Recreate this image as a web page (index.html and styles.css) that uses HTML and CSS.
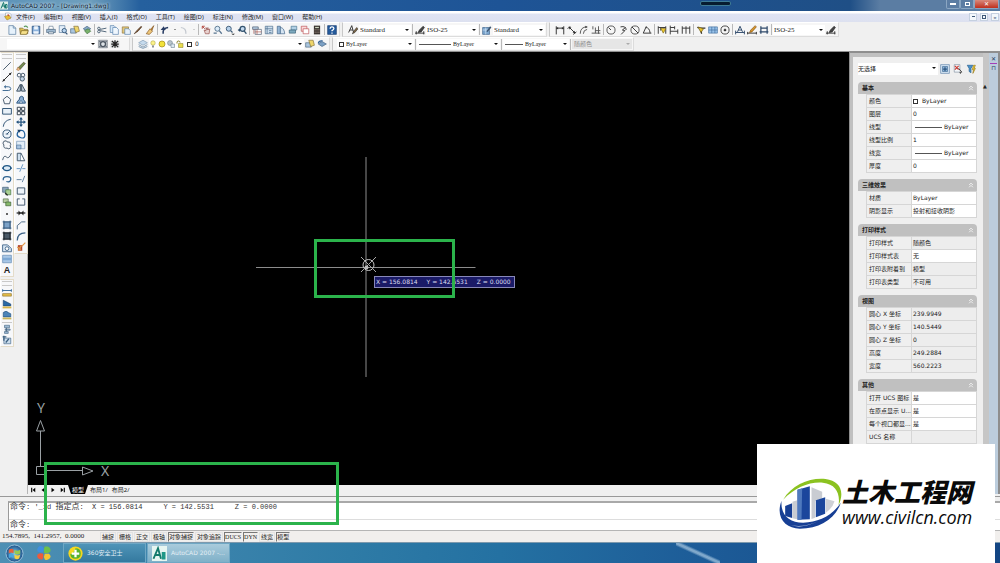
FILE: index.html
```
<!DOCTYPE html>
<html lang="zh-CN">
<head>
  <meta charset="UTF-8">
  <meta name="viewport" content="width=device-width, initial-scale=1.0">
  <title>AutoCAD 2007 - [Drawing1.dwg]</title>
  <link rel="stylesheet" href="styles.css">
</head>
<body>

  <!-- icons -->
  <svg class="sprite" aria-hidden="true">
    <symbol id="new" viewBox="0 0 16 16"><path d="M3 1h7l4 4v10H3z" fill="#e6f1fb" stroke="#4a7196"/><path d="M10 1v4h4" fill="none" stroke="#4a7196"/></symbol>
    <symbol id="open" viewBox="0 0 16 16"><path d="M1 5h5l2 2h6v7H2z" fill="#e2c14e" stroke="#6d5a22"/><path d="M4 9h11l-3 6H2z" fill="#f6e08a" stroke="#6d5a22"/><path d="M8 3q3-3 6 1" fill="none" stroke="#5a9a5f" stroke-width="2"/></symbol>
    <symbol id="save" viewBox="0 0 16 16"><path d="M2 2h12v12H2z" fill="#8db3dc" stroke="#345c8c" stroke-width="1.5"/><path d="M5 2h6v5H5zM4 10h8v4H4z" fill="#eef5fc"/></symbol>
    <symbol id="print" viewBox="0 0 16 16"><path d="M5 2h6l1 5H4z" fill="#fff" stroke="#5b7288"/><path d="M1 7h14v5H1z" fill="#9fb9d1" stroke="#48627a"/><path d="M4 11h8v3H4z" fill="#e9eef3" stroke="#48627a"/></symbol>
    <symbol id="preview" viewBox="0 0 16 16"><path d="M2 1h9v11H2z" fill="#e4effa" stroke="#55789b"/><circle cx="10" cy="9" r="3.5" fill="#b7d3ee" stroke="#38597b" stroke-width="1.5"/><path d="M12 12l3 3" stroke="#38597b" stroke-width="2"/></symbol>
    <symbol id="publish" viewBox="0 0 16 16"><path d="M1 6h9v7H1z" fill="#aac6df" stroke="#48627a"/><path d="M6 2h7l2 8-6 2z" fill="#eed56a" stroke="#7b6931"/></symbol>
    <symbol id="dwf" viewBox="0 0 16 16"><path d="M8 2l6 4-6 4-6-4z" fill="#86a8c4" stroke="#3e5f7e"/><path d="M4 9l6-3 4 4-6 4z" fill="#79b26b" stroke="#3d6b3a"/></symbol>
    <symbol id="layprev" viewBox="0 0 16 16"><path d="M8 4l7 4-7 4-6-4z" fill="#7ba0c4" stroke="#3e5f7e"/><path d="M2 7q1-5 7-4" fill="none" stroke="#2f5f95" stroke-width="2"/></symbol>
    <symbol id="cut" viewBox="0 0 16 16"><path d="M5 7l10-2M5 9l10 2" stroke="#4b6074" stroke-width="1.5"/><circle cx="3" cy="5.500" r="2" fill="none" stroke="#4b6074" stroke-width="1.500"/><circle cx="3" cy="10.500" r="2" fill="none" stroke="#4b6074" stroke-width="1.500"/></symbol>
    <symbol id="copy" viewBox="0 0 16 16"><path d="M2 1h6l3 3v8H2z" fill="#d9e9f8" stroke="#4f7aa6"/><path d="M6 4h6l3 3v8H6z" fill="#f0f7fd" stroke="#4f7aa6"/></symbol>
    <symbol id="paste" viewBox="0 0 16 16"><path d="M2 3h10v10H2z" fill="#e3c77a" stroke="#8a713a"/><path d="M6 6h6l3 3v6H6z" fill="#e7f1fb" stroke="#4f7aa6"/></symbol>
    <symbol id="match" viewBox="0 0 16 16"><path d="M2 14l4-5 7-7 1 1-6 7z" fill="#7a4f2a" stroke="#4b3524"/></symbol>
    <symbol id="brush" viewBox="0 0 16 16"><path d="M14 1L9 7l2 2z" fill="#c78a3a" stroke="#7b4c16"/><path d="M8 6l4 4-5 5-5-1z" fill="#efc87b" stroke="#7b4c16"/></symbol>
    <symbol id="undo" viewBox="0 0 16 16"><path d="M5 14q-1-9 8-10" fill="none" stroke="#283c63" stroke-width="2.500"/><path d="M1 8l5-6 3 6z" fill="#283c63"/></symbol>
    <symbol id="redo" viewBox="0 0 16 16"><path d="M11 14q1-9-8-10" fill="none" stroke="#c3c8cf" stroke-width="2"/></symbol>
    <symbol id="pan" viewBox="0 0 16 16"><path d="M2 2l4 4M2 2h4M2 2v4" stroke="#b1453c" stroke-width="1.500"/><path d="M5 8l2 6h6l1-8-2 2-1-4-1 4-2-4v5z" fill="#e9d3d0" stroke="#8e4540"/></symbol>
    <symbol id="zoom" viewBox="0 0 16 16"><circle cx="7" cy="6" r="4" fill="#dcebf8" stroke="#587590" stroke-width="1.500"/><path d="M10 9l4 5M1 13h5" stroke="#587590" stroke-width="2"/></symbol>
    <symbol id="zoomwin" viewBox="0 0 16 16"><circle cx="6" cy="6" r="4" fill="#b7d1ea" stroke="#3e5b77" stroke-width="1.500"/><path d="M9 9l3 3" stroke="#3e5b77" stroke-width="2"/><path d="M10 14h6l-3 2z" fill="#222"/></symbol>
    <symbol id="zoomprev" viewBox="0 0 16 16"><circle cx="9" cy="6" r="4" fill="#c3d9ee" stroke="#35546f" stroke-width="2"/><path d="M11 9l4 5" stroke="#35546f" stroke-width="2"/><path d="M1 8l4-3v6z" fill="#2a4b6b"/></symbol>
    <symbol id="props" viewBox="0 0 16 16"><path d="M1 3h9v4H1z" fill="#b7cde0" stroke="#41546a"/><path d="M5 7h10v8H5z" fill="#fff" stroke="#41546a"/><path d="M3 7v7M8 7v8M5 11h10" stroke="#a14a42"/></symbol>
    <symbol id="center" viewBox="0 0 16 16"><path d="M2 2h12v12H2z" fill="#cfe0ef" stroke="#436585"/><path d="M5 2v12M2 6h12M8 9h4M8 12h4" stroke="#436585"/></symbol>
    <symbol id="palettes" viewBox="0 0 16 16"><path d="M2 2h5v12H2z" fill="#96b7d6" stroke="#375b80"/><path d="M7 4q6 0 7 10H7z" fill="#d6e5f2" stroke="#375b80"/></symbol>
    <symbol id="sheets" viewBox="0 0 16 16"><path d="M5 2h9v6H5z" fill="#b2d0e4" stroke="#44708b"/><path d="M2 8h10v5H2z" fill="#7eaabe" stroke="#315a70"/></symbol>
    <symbol id="markup" viewBox="0 0 16 16"><path d="M2 2h9v8H2z" fill="#fbdada" stroke="#b8474b"/><path d="M5 6h9v8H5z" fill="#fff" stroke="#b8474b"/></symbol>
    <symbol id="calc" viewBox="0 0 16 16"><path d="M3 1h10v14H3z" fill="#3c3632"/><path d="M5 3h6v2H5z" fill="#cfd7c2"/><path d="M5 7v6M8 7v6M11 7v6" stroke="#b5a195" stroke-dasharray="1 1" stroke-width="2"/></symbol>
    <symbol id="help" viewBox="0 0 16 16"><path d="M1 1h14v14H1z" fill="#245a9b" stroke="#163c70"/><path d="M5 6q0-3 3-3t3 3q0 1-3 3v1M8 12v2" fill="none" stroke="#fff" stroke-width="2"/></symbol>
    <symbol id="textstyle" viewBox="0 0 16 16"><path d="M1 12L6 1l3 11M3 8h5" fill="none" stroke="#333" stroke-width="1.500"/><path d="M7 14l2-4 5-6 2 2-5 6z" fill="#7d6440" stroke="#333"/></symbol>
    <symbol id="dimstyle" viewBox="0 0 16 16"><path d="M0 13h15M2 10v5M14 10v5" stroke="#333" stroke-width="1.500"/><path d="M5 12l2-4 6-6 2 2-5 7z" fill="#444" stroke="#222"/></symbol>
    <symbol id="tablestyle" viewBox="0 0 16 16"><path d="M1 4h11v11H1z" fill="#7da7cf" stroke="#365d87"/><path d="M1 8h11M6 4v11" stroke="#dfeefb"/><path d="M7 10l6-8 2 2-6 7z" fill="#3d5672"/></symbol>
    <symbol id="dimlin" viewBox="0 0 16 16"><path d="M2 2v13M14 2v13M2 5h12" fill="none" stroke="#2c2c2c" stroke-width="1.500"/><path d="M2 5l3-2v4zM14 5l-3-2v4z" fill="#2c2c2c"/></symbol>
    <symbol id="dimalign" viewBox="0 0 16 16"><path d="M3 3l10 10M1 6l4-4M10 15l5-4" fill="none" stroke="#2c2c2c" stroke-width="1.500"/><path d="M3 3l4 1-3 3zM13 13l-4-1 3-3z" fill="#2c2c2c"/></symbol>
    <symbol id="dimarc" viewBox="0 0 16 16"><path d="M2 14Q2 3 13 3M7 14q0-6 6-7" fill="none" stroke="#555" stroke-width="1.500"/><path d="M14 3l-4-2v4z" fill="#444"/></symbol>
    <symbol id="dimord" viewBox="0 0 16 16"><path d="M3 2v5M7 4v9M12 2v12M1 13h14M7 9h8" fill="none" stroke="#555" stroke-width="1.500"/></symbol>
    <symbol id="dimrad" viewBox="0 0 16 16"><circle cx="8" cy="8" r="6.500" fill="none" stroke="#555" stroke-width="1.500"/><path d="M8 8L4 4" stroke="#333" stroke-width="1.500"/></symbol>
    <symbol id="dimjog" viewBox="0 0 16 16"><path d="M4 3q9-2 9 5M12 4L7 8l4 1-6 6" fill="none" stroke="#333" stroke-width="1.500"/></symbol>
    <symbol id="dimdia" viewBox="0 0 16 16"><circle cx="8" cy="8" r="6.500" fill="none" stroke="#555" stroke-width="1.500"/><path d="M3 3l10 10" stroke="#333" stroke-width="1.500"/></symbol>
    <symbol id="dimang" viewBox="0 0 16 16"><path d="M7 2L2 13h13M6 4q6 0 7 9" fill="none" stroke="#333" stroke-width="1.500"/></symbol>
    <symbol id="qdim" viewBox="0 0 16 16"><path d="M2 2v12M14 2v12M2 4h12M6 4v5" stroke="#333" stroke-width="1.500"/><path d="M6 5l8 1-4 7z" fill="#efc92a" stroke="#7a6512"/></symbol>
    <symbol id="dimbase" viewBox="0 0 16 16"><path d="M2 1v14M2 4h7M9 2v5M2 10h12M14 7v7" stroke="#333" stroke-width="1.500"/></symbol>
    <symbol id="dimcont" viewBox="0 0 16 16"><path d="M2 2v12M8 2v12M14 2v12M2 5h12" stroke="#333" stroke-width="1.500"/></symbol>
    <symbol id="leader" viewBox="0 0 16 16"><path d="M2 4l5 1h8M7 5l2 9" fill="none" stroke="#333" stroke-width="2"/><path d="M3 3l9 3-4 6z" fill="#e6c02b" stroke="#5d4c12"/></symbol>
    <symbol id="tol" viewBox="0 0 16 16"><path d="M1 3h14v10H1z" fill="#9ac3ea" stroke="#3f6c9b"/><path d="M6 3v10M11 3v10M1 8h14" stroke="#3f6c9b"/></symbol>
    <symbol id="cmark" viewBox="0 0 16 16"><circle cx="8" cy="8" r="6.500" fill="none" stroke="#444" stroke-width="1.500"/><path d="M8 6v4M6 8h4" stroke="#222" stroke-width="2"/></symbol>
    <symbol id="dimedit" viewBox="0 0 16 16"><path d="M1 12h14M1 9v6M15 9v6M4 11l4-9 4 9M5 8h6" fill="none" stroke="#2f4a6b" stroke-width="1.500"/></symbol>
    <symbol id="dimtedit" viewBox="0 0 16 16"><path d="M1 13h14M1 11v4M15 11v4" stroke="#333" stroke-width="1.500"/><path d="M4 12l2-4 7-7 2 2-7 8z" fill="#d9972b" stroke="#7a4b10"/></symbol>
    <symbol id="dimupd" viewBox="0 0 16 16"><path d="M3 2v12M13 2v12M3 5h10M1 11h14" stroke="#2f4a6b" stroke-width="2"/></symbol>
    <symbol id="ws" viewBox="0 0 16 16"><path d="M1 2h14v12H1z" fill="#b4bac0" stroke="#757d85"/><circle cx="8" cy="8" r="4" fill="#dde2e6" stroke="#4c5662" stroke-width="2"/><path d="M2 3l3 3M14 3l-3 3M2 13l3-3M14 13l-3-3" stroke="#4c5662" stroke-width="1.500"/></symbol>
    <symbol id="mine" viewBox="0 0 16 16"><path d="M1 3h14v11H1z" fill="#d5d8da"/><path d="M3 3l10 10M13 3L3 13M8 2v12M2 8h12" stroke="#222" stroke-width="2"/></symbol>
    <symbol id="layers" viewBox="0 0 16 16"><path d="M8 2l7 4-7 4-7-4z" fill="#c6dbed" stroke="#7c97b0"/><path d="M1 9l7 4 7-4M1 12l7 3 7-3" fill="none" stroke="#7c97b0" stroke-width="1.500"/></symbol>
    <symbol id="bulb" viewBox="0 0 16 16"><circle cx="8" cy="6" r="4.500" fill="#fbf28b" stroke="#a39a3a"/><path d="M6 11h4v4H6z" fill="#8d9298"/></symbol>
    <symbol id="sun" viewBox="0 0 16 16"><circle cx="8" cy="8" r="6" fill="#f2e23a" stroke="#a58f1a" stroke-width="1.500"/></symbol>
    <symbol id="vpfreeze" viewBox="0 0 16 16"><circle cx="6" cy="6" r="5" fill="#b8c4cc" stroke="#6d7d88"/><path d="M8 8h7v7H8z" fill="#dce8f0" stroke="#587085"/></symbol>
    <symbol id="lock" viewBox="0 0 16 16"><path d="M2 7V5q0-3 3-3t3 3" fill="none" stroke="#857c27" stroke-width="2"/><path d="M5 7h9v8H5z" fill="#e8dc4d" stroke="#857c27"/></symbol>
    <symbol id="line" viewBox="0 0 16 16"><path d="M2 14L14 2" stroke="#44586a" stroke-width="1.500"/></symbol>
    <symbol id="xline" viewBox="0 0 16 16"><path d="M1 15L15 1" stroke="#222" stroke-width="1.500"/><path d="M1 15l1-4 3 3zM15 1l-4 1 3 3z" fill="#222"/></symbol>
    <symbol id="pline" viewBox="0 0 16 16"><path d="M1 12h9q4 0 4-3t-4-3H5" fill="none" stroke="#39658f" stroke-width="1.500"/><path d="M3 6l3-3v6z" fill="#39658f"/></symbol>
    <symbol id="polygon" viewBox="0 0 16 16"><path d="M8 2l6 5-2 7H4L2 7z" fill="none" stroke="#44586a" stroke-width="1.500"/></symbol>
    <symbol id="rect" viewBox="0 0 16 16"><path d="M1 4h14v9H1z" fill="#e8f1f9" stroke="#2f5273" stroke-width="1.500"/></symbol>
    <symbol id="arc" viewBox="0 0 16 16"><path d="M2 14Q3 4 14 2" fill="none" stroke="#2f5273" stroke-width="1.500"/></symbol>
    <symbol id="circle" viewBox="0 0 16 16"><circle cx="8" cy="8" r="6.500" fill="#eef4fa" stroke="#2f5273" stroke-width="1.500"/><path d="M8 8l4-4M6 8h4" stroke="#2f5273" stroke-width="1.500"/></symbol>
    <symbol id="cloud" viewBox="0 0 16 16"><path d="M3 2q5-2 5 1 6-1 6 4-2 2 0 5-3 4-6 1-6 1-5-5-3-3 0-6z" fill="none" stroke="#44586a" stroke-width="1.500"/></symbol>
    <symbol id="spline" viewBox="0 0 16 16"><path d="M1 13Q3 4 7 8t8-6" fill="none" stroke="#44586a" stroke-width="1.500"/></symbol>
    <symbol id="ellipse" viewBox="0 0 16 16"><ellipse cx="8" cy="8" rx="6" ry="4" fill="#dcebf7" stroke="#1f5684" stroke-width="2"/><path d="M0 8h3M13 8h3" stroke="#1f5684" stroke-width="2"/></symbol>
    <symbol id="earc" viewBox="0 0 16 16"><path d="M2 10q-1-6 6-6t6 5-7 3" fill="none" stroke="#2b618f" stroke-width="2"/></symbol>
    <symbol id="insert" viewBox="0 0 16 16"><path d="M1 2h9v8H1z" fill="#8da7bb" stroke="#35546f"/><path d="M6 6h8v8H6z" fill="#a9cf92" stroke="#3c6b37"/><path d="M9 15l-4-4" stroke="#222" stroke-width="2"/></symbol>
    <symbol id="block" viewBox="0 0 16 16"><path d="M2 3h8v6H2z" fill="#b8cda0" stroke="#4a6640"/><path d="M6 8h8v6H6z" fill="#87b96c" stroke="#35592a"/></symbol>
    <symbol id="point" viewBox="0 0 16 16"><circle cx="8" cy="8" r="1.500" fill="#222"/></symbol>
    <symbol id="hatch" viewBox="0 0 16 16"><path d="M3 3h10v10H3z" fill="#7ba2c8" stroke="#385d80"/><path d="M1 3h14M1 13h14M3 1v14M13 1v14" stroke="#385d80" stroke-width="1.500"/></symbol>
    <symbol id="gradient" viewBox="0 0 16 16"><path d="M3 3h10v10H3z" fill="#4b5a68" stroke="#1c242c"/><path d="M1 3h14M1 13h14M3 1v14M13 1v14" stroke="#1c242c" stroke-width="1.500"/></symbol>
    <symbol id="region" viewBox="0 0 16 16"><path d="M1 3h8l6 6v5H1z" fill="#d7e6f4" stroke="#44698d" stroke-width="1.500"/><circle cx="8" cy="9" r="3" fill="#fff" stroke="#44698d" stroke-width="1.500"/></symbol>
    <symbol id="table" viewBox="0 0 16 16"><path d="M1 2h14v12H1z" fill="#a9c7e6" stroke="#5b83ad"/><path d="M1 6h14v4H1z" fill="#7ea8d4"/></symbol>
    <symbol id="erase" viewBox="0 0 16 16"><path d="M3 11l9-9 3 2-8 9z" fill="#6f8c4f" stroke="#54452c"/><path d="M1 14l2-4 4 3-3 2z" fill="#eec28c" stroke="#a26c3a"/></symbol>
    <symbol id="copyobj" viewBox="0 0 16 16"><circle cx="5" cy="5" r="3" fill="none" stroke="#44586a" stroke-width="1.500"/><circle cx="11" cy="5" r="3" fill="none" stroke="#44586a" stroke-width="1.500"/><circle cx="10" cy="11" r="3.500" fill="#c5d7e8" stroke="#44586a" stroke-width="1.500"/></symbol>
    <symbol id="mirror" viewBox="0 0 16 16"><path d="M7 2v11H1zM9 2v11h6z" fill="#c3d0dc" stroke="#3c4f60" stroke-width="1.500"/></symbol>
    <symbol id="offset" viewBox="0 0 16 16"><path d="M1 13Q3 8 5 8q0-6 4-6t3 6q3 1 3 5z" fill="#8cb0d3" stroke="#345b82" stroke-width="1.500"/><path d="M6 13q0-4 2-4t2 4z" fill="#eef4fa" stroke="#345b82"/></symbol>
    <symbol id="array" viewBox="0 0 16 16"><path d="M2 2h5v5H2zM9 2h5v5H9zM2 9h5v5H2zM9 9h5v5H9z" fill="#fff" stroke="#2d3a46" stroke-width="1.500"/></symbol>
    <symbol id="move" viewBox="0 0 16 16"><path d="M8 3v10M3 8h10" stroke="#25537d" stroke-width="2"/><path d="M8 0l3 4H5zM8 16l3-4H5zM0 8l4-3v6zM16 8l-4-3v6z" fill="#25537d"/></symbol>
    <symbol id="rotate" viewBox="0 0 16 16"><path d="M5 3q8-3 9 5t-6 6-6-6q0-3 3-5" fill="none" stroke="#25639d" stroke-width="2"/><path d="M2 1h6L5 6z" fill="#1c4166"/></symbol>
    <symbol id="scale" viewBox="0 0 16 16"><path d="M1 2h13v12H1z" fill="#e3eef8" stroke="#6a8cae"/><path d="M1 8h7v6H1z" fill="#a9c5e0" stroke="#4b7198"/></symbol>
    <symbol id="stretch" viewBox="0 0 16 16"><path d="M2 2h6v12H2z" fill="#cfe0ef" stroke="#41566a" stroke-width="1.500"/><path d="M8 2l6 12H8" fill="#fff" stroke="#41566a" stroke-width="1.500"/></symbol>
    <symbol id="trim" viewBox="0 0 16 16"><path d="M1 9h6M10 9h5M6 14l5-12" stroke="#6393bf" stroke-width="1.500"/></symbol>
    <symbol id="extend" viewBox="0 0 16 16"><path d="M1 9h8M10 13l4-10" stroke="#5e7e9c" stroke-width="1.500"/></symbol>
    <symbol id="brkpt" viewBox="0 0 16 16"><path d="M2 3h12v10H2z" fill="#edf3f9" stroke="#3c5268" stroke-width="1.500"/></symbol>
    <symbol id="brk" viewBox="0 0 16 16"><path d="M6 3H2v10h12V3h-4" fill="none" stroke="#3c5268" stroke-width="1.500"/></symbol>
    <symbol id="join" viewBox="0 0 16 16"><path d="M1 8h14" stroke="#222" stroke-width="2"/><path d="M8 8L4 4v8zM8 8l4-4v8z" fill="#222"/></symbol>
    <symbol id="chamfer" viewBox="0 0 16 16"><path d="M2 15V9l7-6h6" fill="none" stroke="#4a6984" stroke-width="1.500"/></symbol>
    <symbol id="fillet" viewBox="0 0 16 16"><path d="M2 15Q2 3 15 3" fill="none" stroke="#3d6285" stroke-width="2"/></symbol>
    <symbol id="explode" viewBox="0 0 16 16"><path d="M3 5h7v9H3z" fill="#b5482f"/><path d="M9 7l6-6M4 14l4-8M2 8l6 4" stroke="#e49a4a" stroke-width="2"/></symbol>
    <symbol id="dist" viewBox="0 0 16 16"><path d="M1 4h14M1 2v4M15 2v4" stroke="#35699b" stroke-width="1.500"/><path d="M1 9h14v4H1z" fill="#e6bf4a" stroke="#8c712a"/></symbol>
    <symbol id="area" viewBox="0 0 16 16"><path d="M2 2l12 6v3H2z" fill="#2b6aa6" stroke="#1a4370"/><path d="M1 12h14v3H1z" fill="#d8b64c"/></symbol>
    <symbol id="mass" viewBox="0 0 16 16"><path d="M2 4q5-4 8 0l4 2v5H2z" fill="#4c84b8" stroke="#1f4d7c"/><path d="M1 12h14v3H1z" fill="#c8b45c"/></symbol>
    <symbol id="list" viewBox="0 0 16 16"><path d="M4 2h8v4H4zM5 8h8v2H5zM4 12h6v3H4z" fill="#9cbad4" stroke="#456582"/><path d="M7 6v6" stroke="#456582" stroke-width="1.500"/></symbol>
    <symbol id="locate" viewBox="0 0 16 16"><path d="M3 5h11v9H3z" fill="#cadcec" stroke="#3b5f80"/><path d="M3 1v8M1 3h6M6 12l5-6" fill="none" stroke="#3b5f80" stroke-width="2"/></symbol>
    <symbol id="pick" viewBox="0 0 16 16"><path d="M1 1h14v14H1z" fill="#d4e4f3" stroke="#5b7fa5"/><path d="M4 4h8v8H4z" fill="#8db3d8" stroke="#3c668f"/><path d="M8 5v6M5 8h6" stroke="#2d567f" stroke-width="2"/></symbol>
    <symbol id="selobj" viewBox="0 0 16 16"><path d="M2 1h9v12H2z" fill="#f4f7fa" stroke="#7b8b9b"/><path d="M3 3l6 6M9 3L3 9" stroke="#cc3d33" stroke-width="2"/><path d="M9 7l5 6-3 .5 1 2" fill="#fff" stroke="#333" stroke-width="1.500"/></symbol>
    <symbol id="qsel" viewBox="0 0 16 16"><path d="M2 2h9L8 7v7L5 12V7z" fill="#4a93cc" stroke="#235a88"/><path d="M12 2l3 0-2 5h2l-4 8 1-6h-2z" fill="#f0c72c" stroke="#92761a"/></symbol>
    <symbol id="fold" viewBox="0 0 16 16"><path d="M3 8l5-5 5 5M3 14l5-5 5 5" fill="none" stroke="#fff" stroke-width="2"/></symbol>
    <symbol id="first" viewBox="0 0 16 16"><path d="M3 2h3v12H3zM14 2v12L7 8z"/></symbol>
    <symbol id="prev" viewBox="0 0 16 16"><path d="M12 2v12L4 8z"/></symbol>
    <symbol id="next" viewBox="0 0 16 16"><path d="M4 2v12l8-6z"/></symbol>
    <symbol id="last" viewBox="0 0 16 16"><path d="M10 2h3v12h-3zM2 2v12l7-6z"/></symbol>
  </svg>

  <header class="titlebar">
    <svg class="app-icon" viewBox="0 0 16 16" aria-hidden="true"><path d="M0 0h16v16H0z" fill="#d8ebe8"/><path d="M2 14L7 2l3 12M4 9h5M11 6h3v7h-3z" fill="none" stroke="#17786e" stroke-width="2"/></svg>
    <h1>AutoCAD 2007 - [Drawing1.dwg]</h1>
    <span class="gadget"></span>
    <div class="win-controls">
      <button aria-label="最小化"><i class="min"></i></button>
      <button aria-label="还原"><i class="max"></i></button>
      <button class="close" aria-label="关闭">✕</button>
    </div>
  </header>

  <nav class="menubar">
    <svg class="doc-icon" viewBox="0 0 16 16" aria-hidden="true"><path d="M3 1h8l3 3v7H3z" fill="#fff" stroke="#7d8ea0"/><path d="M1 8l9-3 4 6-8 4z" fill="#e8be35" stroke="#97761c"/><path d="M7 3l4 2-3 3z" fill="#c6433a"/></svg>
    <button>文件(F)</button>
    <button>编辑(E)</button>
    <button>视图(V)</button>
    <button>插入(I)</button>
    <button>格式(O)</button>
    <button>工具(T)</button>
    <button>绘图(D)</button>
    <button>标注(N)</button>
    <button>修改(M)</button>
    <button>窗口(W)</button>
    <button>帮助(H)</button>
    <div class="mdi">
      <button aria-label="最小化文档"><i class="min"></i></button>
      <button aria-label="还原文档"><i class="max"></i></button>
      <button aria-label="关闭文档">×</button>
    </div>
  </nav>

  <div class="toolbars">
    <div class="toolbar-row">
      <div class="toolbar standard">
        <button aria-label="新建"><svg><use href="#new"/></svg></button>
        <button aria-label="打开"><svg><use href="#open"/></svg></button>
        <button aria-label="保存"><svg><use href="#save"/></svg></button>
        <hr>
        <button aria-label="打印"><svg><use href="#print"/></svg></button>
        <button aria-label="打印预览"><svg><use href="#preview"/></svg></button>
        <button aria-label="发布"><svg><use href="#publish"/></svg></button>
        <button aria-label="三维DWF"><svg><use href="#dwf"/></svg></button>
        <hr>
        <button aria-label="剪切"><svg><use href="#cut"/></svg></button>
        <button aria-label="复制"><svg><use href="#copy"/></svg></button>
        <button aria-label="粘贴"><svg><use href="#paste"/></svg></button>
        <button aria-label="特性匹配"><svg><use href="#match"/></svg></button>
        <button aria-label="块编辑器"><svg><use href="#brush"/></svg></button>
        <hr>
        <button aria-label="放弃"><svg><use href="#undo"/></svg></button>
        <button class="drop" aria-label="放弃列表"></button>
        <button aria-label="重做"><svg><use href="#redo"/></svg></button>
        <button class="drop off" aria-label="重做列表"></button>
        <hr>
        <button aria-label="实时平移"><svg><use href="#pan"/></svg></button>
        <button aria-label="实时缩放"><svg><use href="#zoom"/></svg></button>
        <button aria-label="窗口缩放"><svg><use href="#zoomwin"/></svg></button>
        <button aria-label="缩放上一个"><svg><use href="#zoomprev"/></svg></button>
        <hr>
        <button aria-label="特性"><svg><use href="#props"/></svg></button>
        <button aria-label="设计中心"><svg><use href="#center"/></svg></button>
        <button aria-label="工具选项板"><svg><use href="#palettes"/></svg></button>
        <button aria-label="图纸集"><svg><use href="#sheets"/></svg></button>
        <button aria-label="标记集"><svg><use href="#markup"/></svg></button>
        <button aria-label="计算器"><svg><use href="#calc"/></svg></button>
        <hr>
        <button aria-label="帮助"><svg><use href="#help"/></svg></button>
      </div>
      <div class="toolbar styles">
        <button aria-label="文字样式"><svg><use href="#textstyle"/></svg></button>
        <div class="combo style"><select aria-label="文字样式控制"><option>Standard</option></select></div>
        <hr>
        <button aria-label="标注样式"><svg><use href="#dimstyle"/></svg></button>
        <div class="combo style"><select aria-label="标注样式控制"><option>ISO-25</option></select></div>
        <hr>
        <button aria-label="表格样式"><svg><use href="#tablestyle"/></svg></button>
        <div class="combo style"><select aria-label="表格样式控制"><option>Standard</option></select></div>
      </div>
      <div class="toolbar dims">
        <button aria-label="线性"><svg><use href="#dimlin"/></svg></button>
        <button aria-label="对齐"><svg><use href="#dimalign"/></svg></button>
        <button aria-label="弧长"><svg><use href="#dimarc"/></svg></button>
        <button aria-label="坐标"><svg><use href="#dimord"/></svg></button>
        <hr>
        <button aria-label="半径"><svg><use href="#dimrad"/></svg></button>
        <button aria-label="折弯"><svg><use href="#dimjog"/></svg></button>
        <button aria-label="直径"><svg><use href="#dimdia"/></svg></button>
        <button aria-label="角度"><svg><use href="#dimang"/></svg></button>
        <hr>
        <button aria-label="快速标注"><svg><use href="#qdim"/></svg></button>
        <button aria-label="基线"><svg><use href="#dimbase"/></svg></button>
        <button aria-label="连续"><svg><use href="#dimcont"/></svg></button>
        <hr>
        <button aria-label="快速引线"><svg><use href="#leader"/></svg></button>
        <button aria-label="公差"><svg><use href="#tol"/></svg></button>
        <button aria-label="圆心标记"><svg><use href="#cmark"/></svg></button>
        <hr>
        <button aria-label="编辑标注"><svg><use href="#dimedit"/></svg></button>
        <button aria-label="编辑标注文字"><svg><use href="#dimtedit"/></svg></button>
        <button aria-label="标注更新"><svg><use href="#dimupd"/></svg></button>
        <hr>
        <div class="combo style"><select aria-label="标注样式"><option>ISO-25</option></select></div>
        <button aria-label="标注样式管理"><svg><use href="#dimstyle"/></svg></button>
      </div>
    </div>

    <div class="toolbar-row second">
      <div class="toolbar workspace">
        <div class="combo wide"><select aria-label="工作空间"><option></option></select></div>
        <button aria-label="工作空间设置"><svg><use href="#ws"/></svg></button>
        <button aria-label="我的工作空间"><svg><use href="#mine"/></svg></button>
      </div>
      <div class="toolbar layer">
        <button aria-label="图层特性管理器"><svg><use href="#layers"/></svg></button>
        <div class="combo layers">
          <svg><use href="#bulb"/></svg><svg><use href="#sun"/></svg><svg><use href="#vpfreeze"/></svg><svg><use href="#lock"/></svg><span class="swatch"></span>
          <select class="ui" aria-label="图层"><option>0</option></select>
        </div>
        <button aria-label="置为当前"><svg><use href="#publish"/></svg></button>
        <button aria-label="上一个图层"><svg><use href="#layprev"/></svg></button>
      </div>
      <div class="toolbar props">
        <div class="combo color"><span class="swatch"></span><select aria-label="颜色控制"><option>ByLayer</option></select></div>
        <hr>
        <div class="combo ltype"><span class="rule"></span><select aria-label="线型控制"><option>ByLayer</option></select></div>
        <hr>
        <div class="combo lweight"><span class="rule short"></span><select aria-label="线宽控制"><option>ByLayer</option></select></div>
        <hr>
        <div class="combo plot"><select aria-label="打印样式控制" disabled><option>随颜色</option></select></div>
      </div>
    </div>
  </div>

  <main class="workarea">
    <aside class="side-tools">
      <div class="tool-col">
        <div class="tool-strip draw">
          <button aria-label="直线"><svg><use href="#line"/></svg></button>
          <button aria-label="构造线"><svg><use href="#xline"/></svg></button>
          <button aria-label="多段线"><svg><use href="#pline"/></svg></button>
          <button aria-label="正多边形"><svg><use href="#polygon"/></svg></button>
          <button aria-label="矩形"><svg><use href="#rect"/></svg></button>
          <button aria-label="圆弧"><svg><use href="#arc"/></svg></button>
          <button aria-label="圆"><svg><use href="#circle"/></svg></button>
          <button aria-label="修订云线"><svg><use href="#cloud"/></svg></button>
          <button aria-label="样条曲线"><svg><use href="#spline"/></svg></button>
          <button aria-label="椭圆"><svg><use href="#ellipse"/></svg></button>
          <button aria-label="椭圆弧"><svg><use href="#earc"/></svg></button>
          <button aria-label="插入块"><svg><use href="#insert"/></svg></button>
          <button aria-label="创建块"><svg><use href="#block"/></svg></button>
          <button aria-label="点"><svg><use href="#point"/></svg></button>
          <button aria-label="图案填充"><svg><use href="#hatch"/></svg></button>
          <button aria-label="渐变色"><svg><use href="#gradient"/></svg></button>
          <button aria-label="面域"><svg><use href="#region"/></svg></button>
          <button aria-label="表格"><svg><use href="#table"/></svg></button>
          <button class="mtext" aria-label="多行文字">A</button>
        </div>
        <div class="tool-strip inquiry">
          <button aria-label="距离"><svg><use href="#dist"/></svg></button>
          <button aria-label="面积"><svg><use href="#area"/></svg></button>
          <button aria-label="质量特性"><svg><use href="#mass"/></svg></button>
          <hr>
          <button aria-label="列表"><svg><use href="#list"/></svg></button>
          <button aria-label="定位点"><svg><use href="#locate"/></svg></button>
        </div>
      </div>
      <div class="tool-col">
        <div class="tool-strip modify">
          <button aria-label="删除"><svg><use href="#erase"/></svg></button>
          <button aria-label="复制对象"><svg><use href="#copyobj"/></svg></button>
          <button aria-label="镜像"><svg><use href="#mirror"/></svg></button>
          <button aria-label="偏移"><svg><use href="#offset"/></svg></button>
          <button aria-label="阵列"><svg><use href="#array"/></svg></button>
          <button aria-label="移动"><svg><use href="#move"/></svg></button>
          <button aria-label="旋转"><svg><use href="#rotate"/></svg></button>
          <button aria-label="缩放"><svg><use href="#scale"/></svg></button>
          <button aria-label="拉伸"><svg><use href="#stretch"/></svg></button>
          <button aria-label="修剪"><svg><use href="#trim"/></svg></button>
          <button aria-label="延伸"><svg><use href="#extend"/></svg></button>
          <button aria-label="打断于点"><svg><use href="#brkpt"/></svg></button>
          <button aria-label="打断"><svg><use href="#brk"/></svg></button>
          <button aria-label="合并"><svg><use href="#join"/></svg></button>
          <button aria-label="倒角"><svg><use href="#chamfer"/></svg></button>
          <button aria-label="圆角"><svg><use href="#fillet"/></svg></button>
          <button aria-label="分解"><svg><use href="#explode"/></svg></button>
        </div>
      </div>
    </aside>

    <section class="drawing">
      <div class="canvas">
        <svg class="crosshair" viewBox="0 0 220 220">
          <path d="M110.500 0v220M0 110.500h220" transform="translate(-.5 0)" stroke="#8c8c8c"/>
          <circle cx="112.500" cy="108" r="5.500" fill="none" stroke="#c4c4c4"/>
          <path d="M105 100l15 15M120 100l-15 15" stroke="#a8a8a8"/>
          <circle cx="110.500" cy="110.500" r="2" fill="#bbb"/>
        </svg>
        <output class="dyn-tip"><span>X = 156.0814</span><span>Y = 142.5531</span><span>Z = 0.0000</span></output>
        <div class="mark mark-cursor"></div>
        <svg class="ucs" viewBox="0 0 80 80">
          <g fill="none" stroke="#9aa0a4">
            <path d="M1.500 66.500h8v8h-8zM5.500 66.500V31M9.500 70.500H47"/>
            <path d="M5.500 20.500l4 10.500h-8zM58 71l-10.500 4v-8z"/>
          </g>
          <text x="2" y="13">Y</text>
          <text x="66" y="76">X</text>
        </svg>
      </div>
      <nav class="layout-tabs">
        <button class="step" aria-label="第一个"><svg><use href="#first"/></svg></button>
        <button class="step" aria-label="上一个"><svg><use href="#prev"/></svg></button>
        <button class="step" aria-label="下一个"><svg><use href="#next"/></svg></button>
        <button class="step" aria-label="最后一个"><svg><use href="#last"/></svg></button>
        <button class="tab active">模型</button>
        <button class="tab">布局1</button>
        <button class="tab">布局2</button>
      </nav>
    </section>

    <aside class="palette">
      <div class="palette-body">
        <div class="palette-top">
          <div class="combo object"><select class="ui" aria-label="选择对象"><option>无选择</option></select></div>
          <button aria-label="切换 PICKADD"><svg><use href="#pick"/></svg></button>
          <button aria-label="选择对象"><svg><use href="#selobj"/></svg></button>
          <button aria-label="快速选择"><svg><use href="#qsel"/></svg></button>
        </div>

        <section class="group">
          <h2>基本<button aria-label="折叠"><svg><use href="#fold"/></svg></button></h2>
          <table>
            <tr><th>颜色</th><td><span class="line-value"><span class="swatch"></span>ByLayer</span></td></tr>
            <tr><th>图层</th><td>0</td></tr>
            <tr><th>线型</th><td><span class="line-value"><span class="rule"></span>ByLayer</span></td></tr>
            <tr><th>线型比例</th><td>1</td></tr>
            <tr><th>线宽</th><td><span class="line-value"><span class="rule"></span>ByLayer</span></td></tr>
            <tr><th>厚度</th><td>0</td></tr>
          </table>
        </section>

        <section class="group">
          <h2>三维效果<button aria-label="折叠"><svg><use href="#fold"/></svg></button></h2>
          <table>
            <tr><th>材质</th><td>ByLayer</td></tr>
            <tr><th>阴影显示</th><td>投射和接收阴影</td></tr>
          </table>
        </section>

        <section class="group">
          <h2>打印样式<button aria-label="折叠"><svg><use href="#fold"/></svg></button></h2>
          <table>
            <tr class="locked"><th>打印样式</th><td>随颜色</td></tr>
            <tr><th>打印样式表</th><td>无</td></tr>
            <tr class="locked"><th>打印表附着到</th><td>模型</td></tr>
            <tr class="locked"><th>打印表类型</th><td>不可用</td></tr>
          </table>
        </section>

        <section class="group">
          <h2>视图<button aria-label="折叠"><svg><use href="#fold"/></svg></button></h2>
          <table>
            <tr class="locked"><th>圆心 X 坐标</th><td>239.9949</td></tr>
            <tr class="locked"><th>圆心 Y 坐标</th><td>140.5449</td></tr>
            <tr class="locked"><th>圆心 Z 坐标</th><td>0</td></tr>
            <tr class="locked"><th>高度</th><td>249.2884</td></tr>
            <tr class="locked"><th>宽度</th><td>560.2223</td></tr>
          </table>
        </section>

        <section class="group">
          <h2>其他<button aria-label="折叠"><svg><use href="#fold"/></svg></button></h2>
          <table>
            <tr><th>打开 UCS 图标</th><td>是</td></tr>
            <tr><th>在原点显示 U...</th><td>是</td></tr>
            <tr><th>每个视口都显...</th><td>是</td></tr>
            <tr class="locked"><th>UCS 名称</th><td></td></tr>
          </table>
        </section>
      </div>
      <div class="palette-scroll">▲</div>
      <div class="palette-title">
        <span>✕</span>
        <i></i>
        <span>⊓</span>
      </div>
    </aside>
  </main>

  <section class="command">
    <p class="history"><span class="cjk">命令</span>: '_id <span class="cjk">指定点</span>:  X = 156.0814     Y = 142.5531     Z = 0.0000</p>
    <div class="prompt">
      <label for="cmd"><span class="cjk">命令</span>:</label>
      <input id="cmd" type="text">
    </div>
  </section>

  <footer class="status">
    <output class="coords">154.7895,  141.2957,  0.0000</output>
    <button>捕捉</button>
    <button>栅格</button>
    <button>正交</button>
    <button>极轴</button>
    <button class="on">对象捕捉</button>
    <button>对象追踪</button>
    <button class="on">DUCS</button>
    <button class="on">DYN</button>
    <button>线宽</button>
    <button class="on">模型</button>
  </footer>

  <div class="taskbar">
    <button class="start" aria-label="开始">
      <svg viewBox="0 0 20 20"><defs><radialGradient id="orb"><stop offset="0" stop-color="#7fd0f5"/><stop offset="1" stop-color="#1d4f86"/></radialGradient></defs><circle cx="10" cy="10" r="9" fill="url(#orb)" stroke="#9cc4dd"/><path d="M4 6q3-2 5 0v4q-3-2-5 0z" fill="#e8623a"/><path d="M10 6q3 2 6 0v4q-3 2-6 0z" fill="#97c950"/><path d="M4 11q3-2 5 0v4q-2-2-5 0z" fill="#4aa7e0"/><path d="M10 11q3 2 6 0l-1 4q-2 2-5 0z" fill="#f6cf43"/></svg>
    </button>
    <button class="pin" aria-label="浏览器">
      <svg viewBox="0 0 20 20"><path d="M2 4q2-4 6-2 3 2 1 7-5 1-7-1-1-2 0-4z" fill="#3f8fe0"/><path d="M11 2h4q4 2 3 6l-3 2h-5q-1-5 1-8z" fill="#6cc04a"/><path d="M2 12q3-3 7-1 1 5-1 7-4 1-6-2-1-2 0-4z" fill="#ec5a3a"/><path d="M11 11h5q4 3 1 6-3 3-6 1-2-3 0-7z" fill="#f4c430"/></svg>
    </button>
    <button class="task">
      <svg viewBox="0 0 20 20" aria-hidden="true"><circle cx="10" cy="10" r="9.500" fill="#f6d81f"/><path d="M10 3q7 0 7 7t-7 7-7-7q3 3 7-7z" fill="#58b22d"/><path d="M10 5v10M5 10h10" stroke="#fff" stroke-width="3"/></svg>
      360安全卫士
    </button>
    <button class="task current">
      <svg viewBox="0 0 20 20" aria-hidden="true"><path d="M0 0h20v20H0z" fill="#e6f5f1"/><path d="M2 17L8 3l4 14M4 12h7" fill="none" stroke="#137a6c" stroke-width="2.500"/><path d="M13 8h5v10h-5z" fill="#1f9787"/></svg>
      AutoCAD 2007 -...
    </button>
  </div>

  <div class="mark mark-command"></div>

  <a class="watermark" href="#">
    <svg viewBox="80 120 200 165" aria-hidden="true">
      <path d="M104 240v-30l21-8v44z" fill="#173f94"/>
      <path d="M126 247v-50l14-4v57z" fill="#c9ccd2"/>
      <path d="M141 251v-90l37-10v99z" fill="#1b469c"/>
      <path d="M141 161l14-4-2 95-12-1z" fill="#4f79bd"/>
      <path d="M183 249v-95l32 13v20l-21 8v50z" fill="#c9ccd2"/>
      <path d="M196 244v-51l28-9v49z" fill="#1b469c"/>
      <path d="M226 230v-42l26 8q-4 18-26 34z" fill="#ced1d6"/>
      <path d="M98 191C124 146 180 124 225 129C268 134 284 166 264 208C270 172 256 144 217 140C176 137 134 154 98 191z" fill="#8bc220"/>
      <path d="M93 194C74 245 105 278 148 278C210 278 256 246 271 200C246 238 205 259 158 260C114 260 90 236 93 194z" fill="#173f94"/>
      <path d="M120 268q42 8 82-12-42 22-82 12z" fill="#fff"/>
    </svg>
    <span class="watermark-text">
      <strong>土木工程网</strong>
      <em>www.civilcn.com</em>
    </span>
  </a>

</body>
</html>
```
FILE: styles.css
```
* {
  box-sizing: border-box;
}

body {
  margin: 0;
  height: 100vh;
  display: flex;
  flex-direction: column;
  overflow: hidden;
  position: relative;
  background: #f0f0f0;
  color: #222;
  font: 6px/8px "Noto Sans", "Noto Sans CJK SC", sans-serif;
}

button {
  border: 0;
  padding: 0;
  margin: 0;
  background: none;
  color: inherit;
  font: inherit;
  white-space: nowrap;
}

h1, h2, p {
  margin: 0;
  font: inherit;
}

.sprite {
  display: none;
}

/* title bar */
.titlebar {
  display: flex;
  align-items: center;
  height: 11px;
  background: linear-gradient(90deg, #5d93b8 0, #6f9fbd 90px, #25609e 140px, #1e5496 50%, #1f4f86 85%, #5b7da3 88%);
}

.app-icon {
  width: 8px;
  height: 9px;
  margin-right: 3px;
}

.titlebar h1 {
  flex: 1;
  color: #10202e;
  font-family: "DejaVu Sans", sans-serif;
  text-shadow: 0 0 3px #cfe3f0, 0 0 3px #cfe3f0;
}

.gadget {
  width: 31px;
  height: 5px;
  margin: 0 215px 4px 0;
  border: 1px solid #3d7a94;
  border-radius: 2px;
  background: #071c30;
}

.win-controls {
  display: flex;
  align-self: flex-start;
}

.win-controls button {
  display: grid;
  place-items: center;
  width: 14px;
  height: 9px;
  border: 1px solid #8ba6c2;
  border-top: 0;
  border-radius: 0 0 2px 2px;
  background: #5c7da3;
  color: #fff;
}

.win-controls .close {
  width: 25px;
  margin-right: 1px;
  background: linear-gradient(#d98a7d, #bf2f1d);
}

.min {
  width: 6px;
  height: 2px;
  background: currentColor;
}

.max {
  width: 5px;
  height: 4px;
  border: 1px solid currentColor;
}

/* menu bar */
.menubar {
  display: flex;
  align-items: center;
  gap: 9px;
  height: 11px;
  padding-left: 4px;
  background: linear-gradient(#fff 0, #fff 2px, #dfe3f3 3px, #dde1f0);
}

.doc-icon {
  width: 8px;
  height: 9px;
  margin-right: -5px;
}

.mdi {
  display: flex;
  gap: 3px;
  margin-left: auto;
  padding-right: 1px;
}

.mdi button {
  display: grid;
  place-items: center;
  width: 8px;
  height: 8px;
  border: 1px solid #c5d0e0;
  background: #f3f7fc;
  color: #3e5878;
}

.mdi .min {
  width: 3px;
  height: 1px;
}

.mdi .max {
  width: 4px;
}

/* toolbars */
.toolbars {
  background: #f0f0f0;
  border-bottom: 1px solid #8f8f8f;
}

.toolbar-row {
  display: flex;
  gap: 2px;
  height: 15px;
}

.second {
  height: 14px;
}

.toolbar {
  display: flex;
  align-items: center;
  padding: 0 1px 0 4px;
  border: 1px solid #dcdcdc;
  border-top-color: #fff;
  border-left-color: #c8c8c8;
  background: #f6f6f6;
}

.toolbar button,
.palette-top button {
  display: grid;
  place-items: center;
  width: 12px;
  height: 12px;
}

.toolbar svg,
.tool-strip svg,
.palette-top svg {
  width: 10px;
  height: 10px;
}

.toolbar hr {
  width: 1px;
  height: 11px;
  margin: 0 1px;
  border: 0;
  background: #b9b9b9;
}

.toolbar .drop {
  width: 7px;
}

.drop::after {
  content: "";
  border: 1px solid transparent;
  border-top-color: #333;
}

.drop.off::after {
  border-top-color: #aaa;
}

.toolbar.standard {
  padding-left: 6px;
  border-left: 0;
}

.combo {
  display: flex;
  align-items: center;
  position: relative;
  height: 10px;
  background: #fff;
}

.combo::after {
  content: "";
  position: absolute;
  right: 2px;
  top: 4px;
  border: 2px solid transparent;
  border-top-color: #111;
  pointer-events: none;
}

.combo select {
  flex: 1;
  min-width: 0;
  height: 10px;
  padding: 0 6px 0 0;
  border: 0;
  appearance: none;
  background: none;
  color: #222;
  font: 7px/10px "Liberation Serif", "Noto Sans CJK SC", serif;
}

.combo select.ui,
.dyn-tip,
.palette {
  font: 6px/8px "DejaVu Sans", "Noto Sans CJK SC", sans-serif;
}

.second .combo select {
  font-size: 6px;
}

.style {
  width: 52px;
  padding-left: 1px;
}

.wide {
  width: 90px;
}

.toolbar.workspace {
  padding: 0 8px 0 7px;
  border-left: 0;
}

.layers {
  width: 155px;
  gap: 1px;
}

.layers svg {
  width: 8px;
  height: 8px;
}

.swatch {
  flex: none;
  width: 5px;
  height: 5px;
  margin: 0 2px;
  border: 1px solid #333;
  background: #fff;
}

.rule {
  flex: none;
  width: 32px;
  height: 1px;
  margin: 0 2px;
  background: #555;
}

.rule.short {
  width: 18px;
}

.color {
  width: 77px;
}

.ltype {
  width: 83px;
}

.lweight {
  width: 66px;
}

.plot {
  width: 60px;
  padding-left: 2px;
  background: #e6e6e6;
}

.combo select:disabled {
  color: #8d8d8d;
  opacity: 1;
}

.plot::after {
  border-top-color: #aaa;
}

/* middle */
.workarea {
  flex: 1;
  display: flex;
  min-height: 0;
}

.side-tools {
  display: flex;
  align-items: flex-start;
  width: 28px;
  border-right: 1px solid #b5b5b5;
}

.tool-col {
  flex: 1;
}

.tool-strip {
  display: flex;
  flex-direction: column;
  align-items: center;
  margin-bottom: 2px;
  border: 1px solid #e4dcc9;
  border-left-color: #fff;
  background: #f7f8fa;
}

.tool-strip::before {
  content: "";
  width: 10px;
  height: 3px;
  margin: 1px 0;
  border: solid #c9c9c9;
  border-width: 1px 0;
}

.tool-strip button {
  flex: 1;
  display: grid;
  place-items: center;
  width: 12px;
  min-height: 0;
}

.tool-strip hr {
  width: 10px;
  height: 1px;
  margin: 1px 0;
  border: 0;
  background: #c9c9c9;
}

.draw {
  height: 225px;
}

.modify {
  height: 202px;
}

.inquiry {
  height: 68px;
}

.mtext {
  color: #222;
  font: bold 9px/10px "Liberation Sans", sans-serif;
}

.drawing {
  flex: 1;
  display: flex;
  flex-direction: column;
  min-width: 0;
}

.canvas {
  flex: 1;
  position: relative;
  background: #000;
}

.crosshair {
  position: absolute;
  left: 228px;
  top: 105px;
  width: 220px;
  height: 220px;
}

.dyn-tip {
  position: absolute;
  left: 346px;
  top: 224px;
  display: flex;
  gap: 9px;
  padding: 1px 3px 1px 1px;
  border: 1px solid #8888b8;
  background: #1a1a66;
  color: #dcdcf0;
}

.mark {
  position: absolute;
  border: 3px solid #2bb34b;
  pointer-events: none;
}

.mark-cursor {
  left: 286px;
  top: 187px;
  width: 141px;
  height: 59px;
}

.mark-command {
  left: 44px;
  bottom: 38px;
  width: 295px;
  height: 63px;
}

.ucs {
  position: absolute;
  left: 7px;
  bottom: 5px;
  width: 80px;
  height: 80px;
}

.ucs text {
  fill: #9aa0a4;
  font: 14px "Noto Sans", sans-serif;
}

.layout-tabs {
  display: flex;
  align-items: center;
  height: 9px;
  background: #f0f0f0;
}

.step {
  display: grid;
  place-items: center;
  width: 10px;
}

.step svg {
  width: 6px;
  height: 6px;
}

.tab {
  height: 9px;
  padding: 0 2px;
}

.tab::after {
  content: "/";
}

.tab.active {
  padding: 0 4px;
  background: #000;
  color: #fff;
  clip-path: polygon(0 0, 100% 0, 85% 100%, 15% 100%);
}

.tab.active::after {
  content: "";
}

/* properties palette */
.palette {
  display: flex;
  width: 151px;
  overflow: hidden;
  border: 1px solid #8e8e8e;
  border-width: 1px 2px 0 1px;
  background: #c0c0c0;
}

.palette-body {
  flex: 1;
  display: flex;
  flex-direction: column;
  gap: 6px;
  margin: 4px 0 0 3px;
  padding: 4px 6px 0 5px;
  overflow: hidden;
  background: #efefef;
}

.palette-top {
  display: flex;
  align-items: center;
  gap: 1px;
  height: 15px;
}

.object {
  flex: 1;
  height: 12px;
}

.group h2 {
  display: flex;
  align-items: center;
  justify-content: space-between;
  height: 12px;
  padding: 0 3px 0 4px;
  border-radius: 4px 4px 0 0;
  background: #c0c0c0;
  font-weight: bold;
  line-height: 12px;
}

.group h2 button,
.group h2 svg {
  display: block;
  width: 6px;
  height: 6px;
}

.group table {
  width: calc(100% - 8px);
  margin-left: 8px;
  border-collapse: collapse;
  table-layout: fixed;
}

.group tr {
  height: 13px;
}

.group th,
.group td {
  padding: 0 0 0 2px;
  border: 1px solid #d6d6d6;
  font-weight: normal;
  text-align: left;
  white-space: nowrap;
}

.group th {
  width: 45px;
  padding: 0 0 1px 2px;
  overflow: hidden;
}

.group td {
  padding-left: 1px;
  background: #fff;
}

.group .locked td {
  background: #ededed;
}

.line-value {
  display: flex;
  align-items: center;
}

.line-value .swatch {
  margin: 0 4px 0 0;
}

.line-value .rule {
  width: 27px;
}

.palette-scroll {
  width: 6px;
  padding-top: 29px;
  font-size: 5px;
  background: #c6c6c6;
}

.palette-title {
  display: flex;
  flex-direction: column;
  align-items: center;
  width: 9px;
  padding-top: 2px;
  background: #bccddd;
  color: #25405e;
}

.palette-title i {
  width: 7px;
  height: 1px;
  background: #a43fb8;
}

/* command window */
.command {
  margin-top: 2px;
  padding: 4px 0 0 8px;
  border-top: 1px solid #999;
  color: #333;
  font: 7px/8px "Liberation Mono", "Noto Sans CJK SC", monospace;
}

.cjk {
  font-size: 8px;
}

.history {
  height: 18px;
  border-top: 2px solid #a9a9a9;
  border-left: 1px solid #999;
  padding-left: 1px;
  background: #fff;
  white-space: pre;
}

.prompt {
  display: flex;
  height: 12px;
  padding-left: 1px;
  border: 1px solid #999;
  border-width: 0 0 1px 1px;
  border-bottom-color: #b5b5b5;
  box-shadow: inset 0 1px #ddd;
  background: #fff;
  line-height: 11px;
}

.prompt input {
  flex: 1;
  height: 9px;
  margin-top: 1px;
  padding: 0 2px;
  border: 0;
  outline: 0;
  background: none;
  font: inherit;
}

/* status bar */
.status {
  display: flex;
  align-items: center;
  gap: 1px;
  height: 12px;
  padding-left: 2px;
  border-bottom: 1px solid #7d99ad;
  background: #f1efed;
}

.coords {
  width: 97px;
  font: 7px/9px "Liberation Serif", serif;
  white-space: pre;
}

.status button {
  height: 10px;
  padding: 0 1px;
  border: 1px solid #e2e2e2;
  font-family: "Liberation Serif", "Noto Sans CJK SC", serif;
}

.status .on {
  padding: 0;
  border-color: #777 #eee #eee #777;
}

/* taskbar */
.taskbar {
  display: flex;
  height: 20px;
  background:
    linear-gradient(to top right, transparent 42%, #7fa8cb 48%, #7fa8cb 52%, transparent 58%) 676px 0 / 44px 20px no-repeat,
    linear-gradient(90deg, #4d8fb4 0, #2e7ba6 35%, #2471a2 50%, #1d5c98 70%, #134583);
}

.taskbar button {
  display: flex;
  align-items: center;
  color: #e3eef5;
  font-family: "DejaVu Sans", "Noto Sans CJK SC", sans-serif;
}

.start,
.pin {
  width: 31px;
  padding-left: 5px;
}

.start svg {
  width: 19px;
  height: 19px;
}

.pin svg {
  width: 16px;
  height: 16px;
}

.taskbar .task {
  gap: 4px;
  width: 83px;
  margin-left: 1px;
  padding-left: 4px;
  border: 1px solid #6fa7c4;
  background: linear-gradient(#4f94b8, #34799f);
}

.taskbar .current {
  background: linear-gradient(#a9cbdc, #7fb0c8);
}

.task svg {
  width: 15px;
  height: 15px;
}

/* site logo */
.watermark {
  position: absolute;
  right: 5px;
  bottom: 0;
  display: flex;
  align-items: center;
  width: 238px;
  height: 119px;
  padding-left: 20px;
  background: #fff;
  color: #0a0a0a;
  text-decoration: none;
}

.watermark svg {
  width: 67px;
  height: 55px;
}

.watermark-text {
  display: flex;
  flex-direction: column;
  margin-left: -2px;
  font: italic 18px/20px "Open Sans", sans-serif;
}

.watermark strong {
  font: italic 900 26px/27px "Liberation Sans", "Noto Sans CJK SC", sans-serif;
}
```
